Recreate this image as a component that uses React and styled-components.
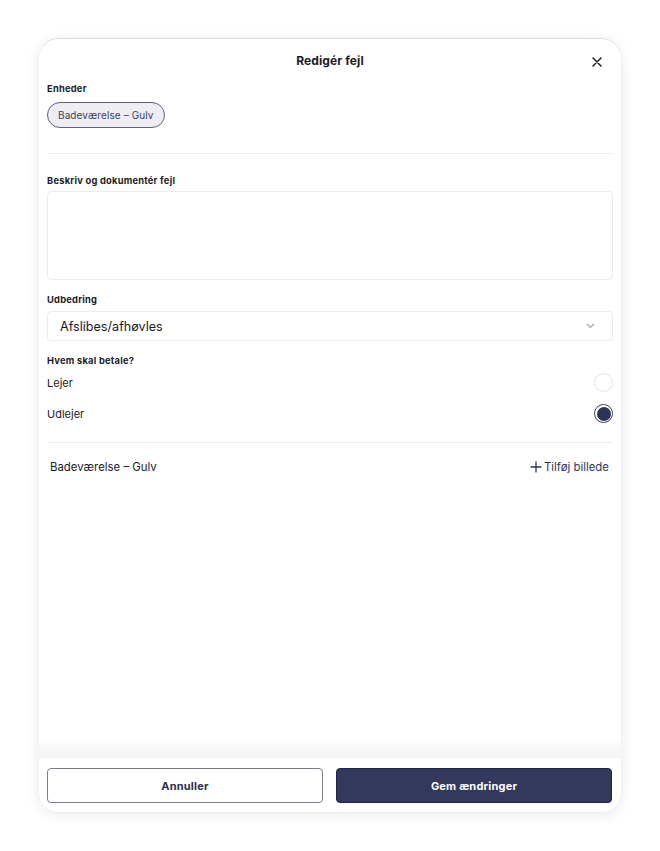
import React, { useState } from 'react';
import styled, { createGlobalStyle } from 'styled-components';

const GlobalStyle = createGlobalStyle`
  html, body {
    margin: 0;
    padding: 0;
    background: #ffffff;
    font-family: Inter, "Noto Sans", "Liberation Sans", sans-serif;
    color: #1b1b1f;
  }
  * { box-sizing: border-box; }
`;

const Page = styled.div`
  padding: 39px 39px 0 39px;
  height: 851px;
`;

const Modal = styled.div`
  width: 582px;
  height: 773px;
  background: #fff;
  border-radius: 20px;
  box-shadow: 0 -1px 0 #d9d9d9, 0 2px 14px rgba(0, 0, 0, 0.1);
  display: flex;
  flex-direction: column;
  overflow: hidden;
`;

const Body = styled.div`
  flex: 1;
  padding: 0 8px;
  display: flex;
  flex-direction: column;
  background: linear-gradient(to bottom, #fff calc(100% - 20px), #f3f3f4 100%);
`;

const Header = styled.div`
  height: 44px;
  display: flex;
  align-items: center;
  justify-content: center;
  position: relative;
`;

const Title = styled.h1`
  margin: 0;
  font-size: 12px;
  font-weight: 700;
  line-height: 14px;
  letter-spacing: 0.1px;
`;

const CloseButton = styled.button`
  position: absolute;
  right: 11px;
  top: 17px;
  width: 11px;
  height: 11px;
  padding: 0;
  border: none;
  background: none;
  display: flex;
  align-items: center;
  justify-content: center;
  color: #111;
`;

const Label = styled.div`
  font-size: 9.3px;
  font-weight: 700;
  line-height: 12px;
  letter-spacing: 0.25px;
  margin-top: ${p => p.$top ?? 0}px;
  margin-bottom: ${p => p.$bottom ?? 4}px;
`;

const Chip = styled.span`
  align-self: flex-start;
  height: 26px;
  padding: 0 10px;
  display: inline-flex;
  align-items: center;
  border-radius: 13px;
  border: 1px solid #5d6079;
  background: #ededf3;
  color: #3b3e57;
  font-size: 10px;
  letter-spacing: 0.1px;
`;

const Divider = styled.hr`
  border: none;
  border-top: 1px solid #ececec;
  margin: ${p => p.$top}px 0 0 0;
  width: 100%;
`;

const TextArea = styled.textarea`
  display: block;
  width: 100%;
  height: 89px;
  border: 1px solid #ebebeb;
  border-radius: 4px;
  resize: none;
  outline: none;
  font-family: inherit;
`;

const Select = styled.div`
  height: 30px;
  border: 1px solid #ebebeb;
  border-radius: 4px;
  display: flex;
  align-items: center;
  justify-content: space-between;
  padding: 0 17px 0 12px;
  font-size: 12.6px;
  color: #1b1b1f;
`;

const RadioRow = styled.label`
  height: 31px;
  display: flex;
  align-items: center;
  justify-content: space-between;
  font-size: 11px;
  color: #222;
`;

const Radio = styled.span`
  width: 19px;
  height: 19px;
  border-radius: 50%;
  border: 1px solid ${p => (p.$checked ? '#3a3f5c' : '#e3e3e3')};
  display: flex;
  align-items: center;
  justify-content: center;
  margin-top: ${p => (p.$checked ? 0 : -1)}px;

  &::after {
    content: '';
    width: 14px;
    height: 14px;
    border-radius: 50%;
    background: ${p => (p.$checked ? '#2d3459' : 'transparent')};
  }
`;

const ImageRow = styled.div`
  display: flex;
  align-items: center;
  justify-content: space-between;
  padding: 16px 4px 0 3px;
  font-size: 11.4px;
  line-height: 16px;
`;

const AddImage = styled.button`
  border: none;
  background: none;
  padding: 0;
  display: flex;
  align-items: center;
  gap: 2px;
  font-family: inherit;
  font-size: 11.4px;
  color: #2f3658;
`;

const Footer = styled.div`
  height: 54px;
  display: flex;
  gap: 13px;
  padding: 10px 9px 9px 8px;
  background: #fff;
`;

const Button = styled.button`
  flex: 1;
  height: 35px;
  border-radius: 4px;
  font-family: inherit;
  font-size: 11px;
  font-weight: 700;
  letter-spacing: 0.2px;
  border: 1px solid ${p => (p.$primary ? '#1f2550' : '#7b7e93')};
  background: ${p => (p.$primary ? '#32395b' : '#fff')};
  color: ${p => (p.$primary ? '#fff' : '#2b2f4a')};
`;

export default function App() {
  const [payer, setPayer] = useState('Udlejer');

  return (
    <>
      <GlobalStyle />
      <Page>
        <Modal>
          <Body>
            <Header>
              <Title>Redigér fejl</Title>
              <CloseButton aria-label="Luk">
                <svg width="10" height="10" viewBox="0 0 10 10">
                  <path d="M1 1L9 9M9 1L1 9" stroke="#111" strokeWidth="1.4" strokeLinecap="round" />
                </svg>
              </CloseButton>
            </Header>

            <Label $bottom={7}>Enheder</Label>
            <Chip>Badeværelse – Gulv</Chip>
            <Divider $top={25} />

            <Label $top={21} $bottom={4}>Beskriv og dokumentér fejl</Label>
            <TextArea />

            <Label $top={14} $bottom={5}>Udbedring</Label>
            <Select>
              <span>Afslibes/afhøvles</span>
              <svg width="9" height="6" viewBox="0 0 9 6">
                <path d="M1 1l3.5 3.5L8 1" fill="none" stroke="#a3a3a8" strokeWidth="1.1" />
              </svg>
            </Select>

            <Label $top={14} $bottom={0}>Hvem skal betale?</Label>
            {['Lejer', 'Udlejer'].map(option => (
              <RadioRow key={option} onClick={() => setPayer(option)}>
                <span>{option}</span>
                <Radio $checked={payer === option} />
              </RadioRow>
            ))}
            <Divider $top={13} />

            <ImageRow>
              <span>Badeværelse – Gulv</span>
              <AddImage>
                <svg width="12" height="12" viewBox="0 0 12 12">
                  <path d="M6 0.5v11M0.5 6h11" stroke="#2f3658" strokeWidth="1.3" />
                </svg>
                Tilføj billede
              </AddImage>
            </ImageRow>
          </Body>

          <Footer>
            <Button>Annuller</Button>
            <Button $primary>Gem ændringer</Button>
          </Footer>
        </Modal>
      </Page>
    </>
  );
}
